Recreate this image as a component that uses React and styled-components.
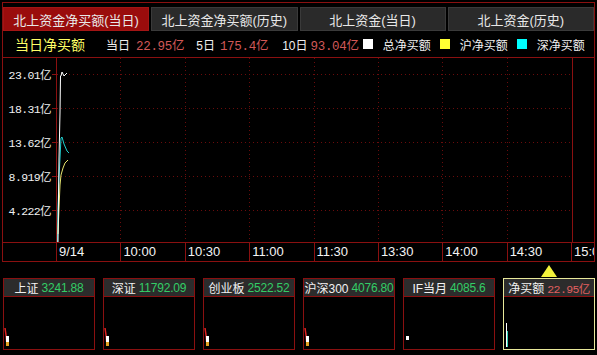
import React from "react";
import styled, { createGlobalStyle } from "styled-components";

const Global = createGlobalStyle`
  html, body { margin: 0; padding: 0; background: #000; overflow: hidden; }
  body { font-family: "Liberation Sans", "Noto Sans CJK SC", sans-serif; }
`;

const RED = "#8a1010";
const CJK = `"Liberation Sans", "Noto Sans CJK SC", sans-serif`;
const MONO = `"Liberation Mono", "Noto Sans CJK SC", monospace`;

const Page = styled.div`
  width: 597px;
  height: 355px;
  background: #000;
  padding-top: 2px;
  box-sizing: border-box;
`;

const Box = styled.div`
  margin-left: 2px;
  width: 593px;
  border: 1px solid ${RED};
  box-sizing: border-box;
  display: flex;
  flex-direction: column;
`;

const Tabs = styled.div`
  display: flex;
  gap: 2px;
  padding-top: 4px;
`;

const Tab = styled.div`
  flex: 1;
  height: 24px;
  display: flex;
  align-items: center;
  justify-content: center;
  font-family: ${CJK};
  font-size: 13px;
  color: #e8e8e8;
  background: ${(p) => (p.$active ? "#9a0c0c" : "#2a2a2a")};
  border: 1px solid ${(p) => (p.$active ? "#a31515" : "#3a3a3a")};
  box-sizing: border-box;
  white-space: nowrap;
`;

const Header = styled.div`
  height: 26px;
  border-bottom: 1px solid ${RED};
  display: flex;
  align-items: center;
  padding-left: 12px;
  font-family: ${CJK};
  white-space: nowrap;
`;

const Title = styled.span`
  color: #ffff66;
  font-size: 14px;
  margin-right: 21px;
`;

const Stat = styled.span`
  display: flex;
  align-items: center;
  gap: ${(p) => p.$gap || 6}px;
  margin-right: ${(p) => p.$mr || 12}px;
`;

const StatLabel = styled.span`
  color: #f0f0f0;
  font-size: 12px;
`;

const StatValue = styled.span`
  color: #d05858;
  font-family: ${MONO};
  font-size: 12.5px;
  letter-spacing: -0.3px;
`;

const Legend = styled.span`
  display: flex;
  align-items: center;
  gap: 10px;
  margin-right: 9px;
  color: #f0f0f0;
  font-size: 12px;
`;

const Swatch = styled.span`
  width: 10px;
  height: 10px;
  background: ${(p) => p.$c};
`;

const ChartRow = styled.div`
  display: flex;
  height: 184px;
`;

const YAxis = styled.div`
  width: 53px;
  display: flex;
  flex-direction: column;
  margin-top: -1px;
`;

const YLabel = styled.div`
  height: 34px;
  display: flex;
  align-items: center;
  justify-content: flex-end;
  padding-right: 5px;
  color: #f0f0f0;
  font-family: ${MONO};
  font-size: 11.5px;
  position: relative;
  letter-spacing: -0.6px;
  &::after {
    content: "";
    position: absolute;
    right: 0;
    top: 50%;
    width: 4px;
    height: 1px;
    background: ${RED};
  }
`;

const Plot = styled.div`
  width: 515px;
  border-left: 1px solid ${RED};
  border-right: 1px solid ${RED};
`;

const Spare = styled.div`
  flex: 1;
`;

const XAxis = styled.div`
  display: flex;
  height: 18px;
  border-top: 1px solid ${RED};
`;

const XCell = styled.div`
  flex: ${(p) => (p.$last ? "1" : `0 0 ${p.$w}px`)};
  border-left: ${(p) => (p.$first ? "none" : `1px solid ${RED}`)};
  box-sizing: border-box;
  overflow: hidden;
  white-space: nowrap;
  color: #f4f4f4;
  font-family: "Liberation Sans", sans-serif;
  font-size: 13px;
  line-height: 18px;
  padding-left: 2px;
`;

const Cards = styled.div`
  display: flex;
  gap: 8px;
  padding-left: 3px;
  margin-top: 16px;
`;

const Card = styled.div`
  width: 92px;
  height: 72px;
  box-sizing: border-box;
  border: 1px solid ${(p) => (p.$sel ? "#e8e89a" : RED)};
  display: flex;
  flex-direction: column;
  position: relative;
`;

const Pointer = styled.div`
  position: absolute;
  top: -14px;
  left: 50%;
  margin-left: -8px;
  width: 0;
  height: 0;
  border-left: 8px solid transparent;
  border-right: 8px solid transparent;
  border-bottom: 12px solid #f2f23a;
`;

const CardHead = styled.div`
  height: 17px;
  background: #2c2c2c;
  border-bottom: 1px solid ${RED};
  display: flex;
  align-items: center;
  justify-content: center;
  gap: 3px;
  white-space: nowrap;
`;

const CardTitle = styled.span`
  color: #f2f2f2;
  font-family: ${CJK};
  font-size: 12px;
`;

const CardValue = styled.span`
  color: ${(p) => (p.$red ? "#e06060" : "#33cc66")};
  font-family: ${(p) => (p.$red ? MONO : `"Liberation Sans", sans-serif`)};
  font-size: ${(p) => (p.$red ? "11.5px" : "12px")};
  letter-spacing: ${(p) => (p.$red ? "-0.6px" : "-0.2px")};
`;

const CardBody = styled.div`
  flex: 1;
  display: flex;
  align-items: flex-end;
  padding: 0 0 2px 0;
`;

const yLabels = ["23.01亿", "18.31亿", "13.62亿", "8.919亿", "4.222亿"];
const gridY = [16, 50, 84, 118, 152];
const xTimes = ["9/14", "10:00", "10:30", "11:00", "11:30", "13:30", "14:00", "14:30"];
const step = 515 / 8;

function ChartSvg() {
  const vx = [1, 2, 3, 4, 5, 6, 7].map((i) => Math.round(i * step));
  return (
    <svg width="515" height="184" style={{ display: "block" }}>
      {gridY.map((y) => (
        <line key={y} x1="0" x2="515" y1={y + 0.5} y2={y + 0.5} stroke="#6a0c0c" strokeDasharray="1 3" />
      ))}
      {vx.map((x) => (
        <line key={x} x1={x - 0.5} x2={x - 0.5} y1="0" y2="184" stroke="#6a0c0c" strokeDasharray="1 3" />
      ))}
      <polyline points="0.5,184 1,150 2,120 3,100 4,80 5,79 7,86 10,93 12,95" fill="none" stroke="#22d0d0" strokeWidth="1" />
      <polyline points="1,176 2,150 3,127 4,117 6,110 8,105 11,102" fill="none" stroke="#e8e870" strokeWidth="1" />
      <polyline points="1,184 2,100 3,55 3.5,18 4,18 5,14 7,18 10,15" fill="none" stroke="#ffffff" strokeWidth="1" />
    </svg>
  );
}

function Spark({ kind }) {
  if (kind === "net")
    return (
      <svg width="10" height="26" style={{ display: "block", marginLeft: 1 }}>
        <line x1="1.5" y1="2" x2="1.5" y2="26" stroke="#ffffff" />
        <line x1="2.5" y1="10" x2="2.5" y2="26" stroke="#30d0b0" />
      </svg>
    );
  if (kind === "if")
    return (
      <svg width="10" height="22" style={{ display: "block", marginLeft: 1 }}>
        <rect x="1" y="11" width="3" height="4" fill="#ffffff" />
      </svg>
    );
  return (
    <svg width="10" height="22" style={{ display: "block", marginLeft: 0 }}>
      <polyline points="1,3 2,10 3,20" fill="none" stroke="#e02020" strokeWidth="1.5" />
      <rect x="2" y="11" width="3" height="6" fill="#ffffff" />
      <rect x="2" y="17" width="3" height="4" fill="#e0a020" />
    </svg>
  );
}

const cards = [
  { t: "上证", v: "3241.88", k: "a" },
  { t: "深证", v: "11792.09", k: "a" },
  { t: "创业板", v: "2522.52", k: "a" },
  { t: "沪深300", v: "4076.80", k: "a" },
  { t: "IF当月", v: "4085.6", k: "if" },
  { t: "净买额", v: "22.95亿", k: "net", sel: true },
];

export default function App() {
  return (
    <Page>
      <Global />
      <Box>
        <Tabs>
          <Tab $active>北上资金净买额(当日)</Tab>
          <Tab>北上资金净买额(历史)</Tab>
          <Tab>北上资金(当日)</Tab>
          <Tab>北上资金(历史)</Tab>
        </Tabs>
        <Header>
          <Title>当日净买额</Title>
          <Stat $mr={12}>
            <StatLabel>当日</StatLabel>
            <StatValue>22.95亿</StatValue>
          </Stat>
          <Stat $gap={5} $mr={14}>
            <StatLabel>5日</StatLabel>
            <StatValue>175.4亿</StatValue>
          </Stat>
          <Stat $gap={3} $mr={4}>
            <StatLabel>10日</StatLabel>
            <StatValue>93.04亿</StatValue>
          </Stat>
          <Legend>
            <Swatch $c="#ffffff" />
            总净买额
          </Legend>
          <Legend>
            <Swatch $c="#ffff33" />
            沪净买额
          </Legend>
          <Legend>
            <Swatch $c="#00ffff" />
            深净买额
          </Legend>
        </Header>
        <ChartRow>
          <YAxis>
            {yLabels.map((l) => (
              <YLabel key={l}>{l}</YLabel>
            ))}
          </YAxis>
          <Plot>
            <ChartSvg />
          </Plot>
          <Spare />
        </ChartRow>
        <XAxis>
          <XCell $first $w={53} />
          {xTimes.map((t) => (
            <XCell key={t} $w={step}>
              {t}
            </XCell>
          ))}
          <XCell $last>15:00</XCell>
        </XAxis>
      </Box>
      <Cards>
        {cards.map((c) => (
          <Card key={c.t} $sel={c.sel}>
            {c.sel && <Pointer />}
            <CardHead>
              <CardTitle>{c.t}</CardTitle>
              <CardValue $red={c.sel}>{c.v}</CardValue>
            </CardHead>
            <CardBody>
              <Spark kind={c.k} />
            </CardBody>
          </Card>
        ))}
      </Cards>
    </Page>
  );
}
